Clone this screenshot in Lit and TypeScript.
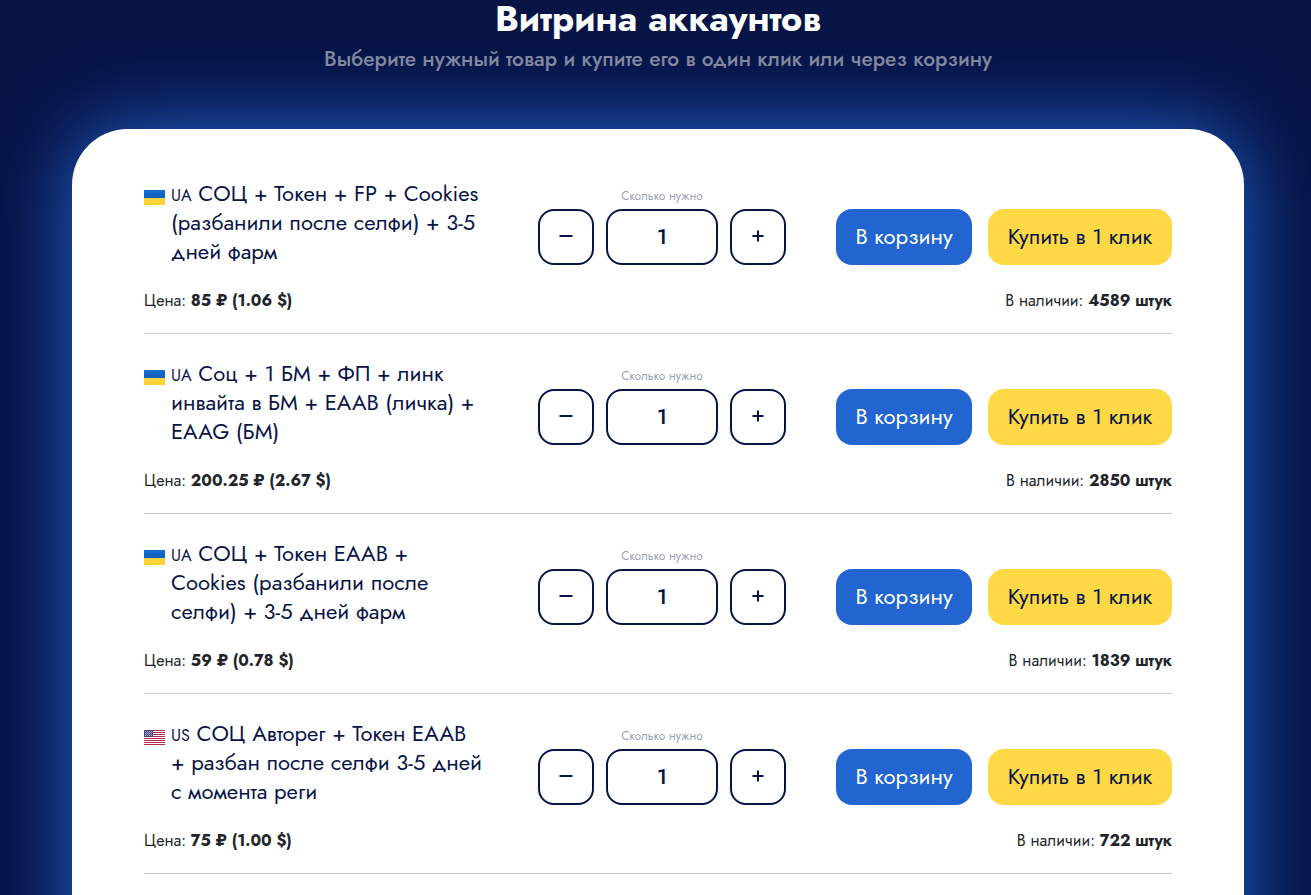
import { LitElement, html, css, svg } from "lit";
import { customElement, property, state } from "lit/decorators.js";

interface Product {
  country: "UA" | "US";
  title: string;
  price: string;
  stock: number;
}

const PRODUCTS: Product[] = [
  { country: "UA", title: "СОЦ + Токен + FP + Cookies\n(разбанили после селфи) + 3-5\nдней фарм", price: "85 ₽ (1.06 $)", stock: 4589 },
  { country: "UA", title: "Соц + 1 БМ + ФП + линк\nинвайта в БМ + EAAB (личка) +\nEAAG (БМ)", price: "200.25 ₽ (2.67 $)", stock: 2850 },
  { country: "UA", title: "СОЦ + Токен EAAB +\nCookies (разбанили после\nселфи) + 3-5 дней фарм", price: "59 ₽ (0.78 $)", stock: 1839 },
  { country: "US", title: "СОЦ Авторег + Токен EAAB\n+ разбан после селфи 3-5 дней\nс момента реги", price: "75 ₽ (1.00 $)", stock: 722 },
];

const flagUA = html`<svg class="flag" viewBox="0 0 21 15" aria-hidden="true">
  <defs>
    <linearGradient id="b" x1="0" y1="0" x2="0" y2="1"><stop stop-color="#156dd1" /><stop offset="1" stop-color="#0d5eb9" /></linearGradient>
    <linearGradient id="y" x1="0" y1="0" x2="0" y2="1"><stop stop-color="#ffd84a" /><stop offset="1" stop-color="#ffd12d" /></linearGradient>
  </defs>
  <rect width="21" height="8" fill="url(#b)" />
  <rect y="8" width="21" height="7" fill="url(#y)" />
</svg>`;

const flagUS = html`<svg class="flag" viewBox="0 0 21 15" aria-hidden="true">
  <rect width="21" height="15" fill="#fff" />
  ${[0, 2, 4, 6, 8, 10, 12, 14].map((y) => svg`<rect y=${y} width="21" height="1" fill="#b82a48" />`)}
  <rect width="9" height="7" fill="#46467f" />
  ${[1, 3, 5].map((y) => [1, 3, 5, 7].map((x) => svg`<rect x=${x} y=${y} width="1" height="1" fill="#b4b4cc" />`))}
  ${[2, 4].map((y) => [2, 4, 6].map((x) => svg`<rect x=${x} y=${y} width="1" height="1" fill="#9a9abb" />`))}
</svg>`;

@customElement("product-row")
export class ProductRow extends LitElement {
  @property({ attribute: false }) product!: Product;
  @state() private quantity = 1;

  static styles = css`
    :host {
      display: block;
      padding: 25px 0 20px;
      border-bottom: 1px solid #c2c4d0;
    }
    .main {
      display: grid;
      grid-template-columns: 1fr 248px 336px;
      column-gap: 50px;
    }
    .name {
      display: flex;
      gap: 6px;
      margin: 0;
      color: #071446;
      font-size: 22px;
      font-weight: 400;
      line-height: 29px;
      white-space: pre-line;
    }
    .flag {
      flex: none;
      width: 21px;
      height: 15px;
      margin-top: 11px;
    }
    .code {
      font-size: 16px;
      line-height: 16px;
    }
    .label {
      display: block;
      padding-top: 4px;
      color: #9a9fb4;
      font-size: 12px;
      line-height: 26px;
      text-align: center;
    }
    .stepper {
      display: grid;
      grid-template-columns: 56px 1fr 56px;
      gap: 12px;
    }
    button,
    input {
      box-sizing: border-box;
      height: 56px;
      min-width: 0;
      margin: 0;
      padding: 0 0 2px;
      border: 0;
      border-radius: 16px;
      font-family: inherit;
      font-size: 22px;
      text-align: center;
    }
    button {
      cursor: pointer;
    }
    .step,
    .count {
      border: 2px solid #071446;
      background: #fff;
      color: #071446;
      font-weight: 500;
    }
    .step svg {
      display: block;
      margin: 0 auto;
    }
    .actions {
      display: grid;
      grid-template-columns: 136px 1fr;
      gap: 16px;
      padding-top: 30px;
    }
    .cart {
      background: #2265d1;
      color: #fff;
    }
    .buy {
      background: #ffd945;
      color: #071446;
    }
    .info {
      display: flex;
      justify-content: space-between;
      margin-top: 23px;
      color: #212529;
      font-size: 16px;
      line-height: 24px;
    }
    .info b {
      font-weight: 700;
    }
  `;

  render() {
    const p = this.product;
    return html`
      <div class="main">
        <h2 class="name">${p.country === "UA" ? flagUA : flagUS}<span><span class="code">${p.country}</span> ${p.title}</span></h2>
        <div>
          <label class="label" for="count">Сколько нужно</label>
          <div class="stepper">
            <button class="step" type="button" aria-label="Меньше" @click=${() => (this.quantity = Math.max(1, this.quantity - 1))}>
              <svg width="14" height="14" viewBox="0 0 14 14"><path d="M0.5 7h13" stroke="currentColor" stroke-width="2" /></svg>
            </button>
            <input
              class="count"
              id="count"
              type="text"
              inputmode="numeric"
              .value=${String(this.quantity)}
              @change=${(e: Event) => (this.quantity = Number((e.target as HTMLInputElement).value) || 1)}
            />
            <button class="step" type="button" aria-label="Больше" @click=${() => this.quantity++}>
              <svg width="12" height="12" viewBox="0 0 12 12"><path d="M0.5 6h11M6 0.5v11" stroke="currentColor" stroke-width="2" /></svg>
            </button>
          </div>
        </div>
        <div class="actions">
          <button class="cart" type="button">В корзину</button>
          <button class="buy" type="button">Купить в 1 клик</button>
        </div>
      </div>
      <div class="info">
        <span>Цена: <b>${p.price}</b></span>
        <span>В наличии: <b>${p.stock} штук</b></span>
      </div>
    `;
  }
}

@customElement("app-root")
export class AppRoot extends LitElement {
  static styles = css`
    :host {
      display: block;
      height: 100vh;
      overflow: hidden;
      background: #071446;
      font-family: Jost, Lato, "Open Sans", sans-serif;
    }
    .page {
      padding: 0 67px 0 72px;
    }
    .heading {
      margin: 0;
      color: #fff;
      font-size: 36px;
      font-weight: 700;
      line-height: 36px;
      text-align: center;
    }
    .lead {
      margin: 8px 0 55px;
      color: #8288a0;
      font-size: 21px;
      font-weight: 500;
      line-height: 30px;
      text-align: center;
    }
    .card {
      padding: 25px 72px 160px;
      border-radius: 56px;
      background: #fff;
      box-shadow: 0 0 80px #2265d1;
    }
  `;

  render() {
    return html`
      <main class="page">
        <h1 class="heading">Витрина аккаунтов</h1>
        <p class="lead">Выберите нужный товар и купите его в один клик или через корзину</p>
        <section class="card">
          ${PRODUCTS.map((p) => html`<product-row .product=${p}></product-row>`)}
        </section>
      </main>
    `;
  }
}
